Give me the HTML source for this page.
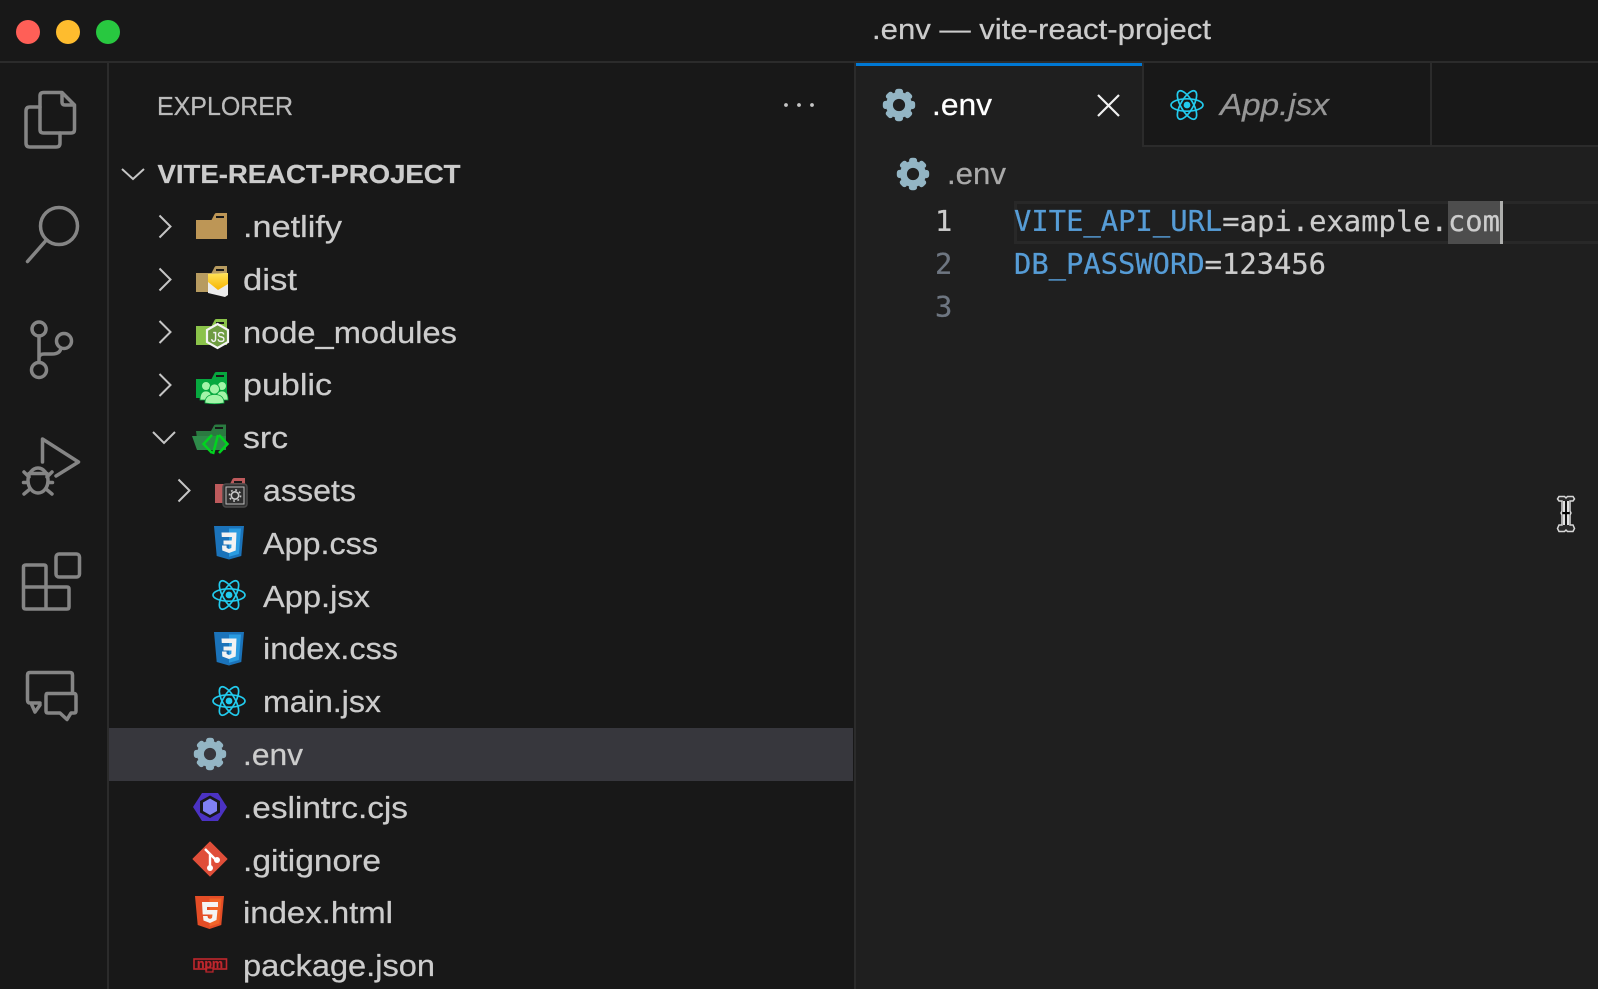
<!DOCTYPE html>
<html><head><meta charset="utf-8"><title>.env — vite-react-project</title>
<style>
html,body{margin:0;padding:0;background:#181818;width:1598px;height:989px;overflow:hidden}
svg{display:block}
text{font-family:"Liberation Sans",sans-serif;fill:#cccccc;stroke:#cccccc;stroke-width:.25}
.f{font-size:31px}
.m{font-family:"DejaVu Sans Mono","Liberation Mono",monospace;font-size:28.8px}
.ic{fill:none;stroke:#858585;stroke-width:3.5;stroke-linejoin:round;stroke-linecap:round}
.ch{fill:none;stroke:#c5c5c5;stroke-width:2}
</style></head><body>
<svg width="1598" height="989" viewBox="0 0 1598 989" xmlns="http://www.w3.org/2000/svg">
<defs>
<linearGradient id="yel" x1="0" y1="0" x2="0" y2="1"><stop offset="0" stop-color="#ffe25a"/><stop offset="1" stop-color="#f7b500"/></linearGradient>
<g id="gear"><circle r="9.6" fill="none" stroke="#93b5c4" stroke-width="7"/><circle r="13.6" fill="none" stroke="#93b5c4" stroke-width="5.2" stroke-linecap="round" stroke-dasharray="3 7.68" stroke-dashoffset="1.5" transform="rotate(-90)"/></g>
<g id="react" fill="none" stroke="#22cbee" stroke-width="1.7"><ellipse rx="16" ry="6.2"/><ellipse rx="16" ry="6.2" transform="rotate(60)"/><ellipse rx="16" ry="6.2" transform="rotate(120)"/><circle r="3.4" fill="#22cbee" stroke="none"/></g>
<path id="folder" d="M0 7H15.5L18.5 1.2Q19 0 20.5 0H31V26H0Z"/>
<g id="css"><path d="M0 0H30L27.3 30L15 33.5L2.7 30Z" fill="#1b73ba"/><path d="M15 2.5H27L24.8 28L15 30.8Z" fill="#2a9be0"/><path d="M7.5 6.5H22.5L21.7 24.5L15 27L8.3 24.5L8 19.5H12.5L12.7 22L15 23L17.3 22L17.5 18.5H9.5V14.5H17.7L18 11H7.8Z" fill="#f2f2f2"/></g>
</defs>

<!-- window -->
<rect width="1598" height="989" fill="#181818"/>
<rect x="856" y="63" width="742" height="926" fill="#1f1f1f"/>
<rect x="1142" y="63" width="456" height="82" fill="#181818"/>
<rect y="61" width="1598" height="2" fill="#2b2b2b"/>
<rect x="107" y="63" width="2" height="926" fill="#2b2b2b"/>
<rect x="854" y="63" width="2" height="926" fill="#2b2b2b"/>
<rect x="1142" y="145" width="456" height="2" fill="#2b2b2b"/>
<rect x="1142" y="63" width="2" height="84" fill="#2b2b2b"/>
<rect x="1430" y="63" width="2" height="84" fill="#2b2b2b"/>
<rect x="856" y="63" width="286" height="3" fill="#0078d4"/>

<!-- traffic lights -->
<circle cx="28" cy="32" r="12" fill="#ff5f57"/>
<circle cx="68" cy="32" r="12" fill="#febc2e"/>
<circle cx="108" cy="32" r="12" fill="#28c840"/>
<text x="872" y="39" font-size="29" textLength="339" lengthAdjust="spacingAndGlyphs">.env — vite-react-project</text>

<!-- activity bar -->
<path class="ic" d="M40 107V96Q40 92.5 43.5 92.5H62L74.5 105V129.5Q74.5 133 71 133H43.5Q40 133 40 129.5V107M62 92.5V102Q62 105 65 105H74.5"/>
<path class="ic" d="M40 107H30Q26 107 26 111V143Q26 147 30 147H56Q60 147 60 143V133"/>
<circle class="ic" cx="59" cy="226" r="18.5"/>
<path class="ic" d="M27.5 261.5L46 240.5"/>
<circle class="ic" cx="39" cy="329" r="7"/>
<circle class="ic" cx="39" cy="370" r="7.5"/>
<circle class="ic" cx="64" cy="341" r="7.5"/>
<path class="ic" d="M39 336V362M39 358Q39 354 44 354H52Q60 354 61 348"/>
<path class="ic" d="M42.5 462V439L78.5 462L56 476"/>
<ellipse class="ic" cx="38" cy="480.5" rx="10" ry="12.5"/>
<path class="ic" d="M29 473.5H47M24 472L29 477M52 472L47 477M23.5 482.5H28M48 482.5H52.5M24 494L30 489M52 494L46 489"/>
<rect class="ic" x="56" y="554" width="23.5" height="23" rx="3"/>
<path class="ic" d="M46 587H23.5V567Q23.5 565 26 565H44Q46 565 46 567V609M23.5 587V607Q23.5 609 26 609H67Q69 609 69 607V589Q69 587 67 587H46"/>
<path class="ic" d="M40 703H30Q27.5 703 27.5 700V675Q27.5 672.5 30 672.5H70Q72.5 672.5 72.5 675V692M31 703L35 712L40 705"/>
<path class="ic" d="M47 693.5H74Q76 693.5 76 696V711Q76 713 74 713H71L67 719.5L60 713H48Q46 713 46 711V696Q46 693.5 47 693.5Z"/>

<!-- explorer header -->
<text x="157" y="115" font-size="26" textLength="136" lengthAdjust="spacingAndGlyphs" style="fill:#bbbbbb;stroke:#bbbbbb">EXPLORER</text>
<circle cx="786" cy="105" r="1.9" fill="#c5c5c5"/><circle cx="799" cy="105" r="1.9" fill="#c5c5c5"/><circle cx="812" cy="105" r="1.9" fill="#c5c5c5"/>
<path class="ch" d="M122 169L133 179L144 169"/>
<text x="157.5" y="183" font-size="26" font-weight="700" textLength="303" lengthAdjust="spacingAndGlyphs">VITE-REACT-PROJECT</text>

<!-- selected row -->
<rect x="109" y="728" width="744" height="53" fill="#37373d"/>

<!-- chevrons -->
<path class="ch" d="M159.5 215.5L170.5 226.5L159.5 237.5"/>
<path class="ch" d="M159.5 268.5L170.5 279.5L159.5 290.5"/>
<path class="ch" d="M159.5 321L170.5 332L159.5 343"/>
<path class="ch" d="M159.5 374L170.5 385L159.5 396"/>
<path class="ch" d="M153 432L164 443L175 432"/>
<path class="ch" d="M178.5 479.5L189.5 490.5L178.5 501.5"/>

<!-- folder icons -->
<use href="#folder" x="196" y="213" fill="#bd9656"/><rect x="216" y="216" width="8" height="2" fill="#181818"/>
<use href="#folder" x="196" y="266" fill="#b79b60"/><rect x="216" y="269" width="8" height="2" fill="#181818"/>
<path d="M208 274L228 273V295L225 297L208 293Z" fill="#ececec"/>
<path d="M208 274L228 273V284L218 290L208 282Z" fill="url(#yel)"/>

<use href="#folder" x="196" y="319" fill="#8bc34a"/><rect x="216" y="322" width="8" height="2" fill="#181818"/>
<path d="M217.5 324L228 330V342L217.5 348L207 342V330Z" fill="#6f9c42" stroke="#f4f4f4" stroke-width="2.2"/>
<text x="218" y="342" font-size="15" text-anchor="middle" style="fill:#f4f4f4;stroke:#f4f4f4" textLength="14" lengthAdjust="spacingAndGlyphs">JS</text>

<use href="#folder" x="196" y="372" fill="#07a83f"/><rect x="216" y="375" width="8" height="2" fill="#181818"/>
<g fill="#a3f5a8" stroke="#07a83f" stroke-width=".8"><circle cx="206" cy="386" r="4.4"/><circle cx="222" cy="386" r="4.4"/><path d="M200 400Q200 391 206 391Q212 391 212 400Z"/><path d="M216 400Q216 391 222 391Q228 391 228 400Z"/><circle cx="214.5" cy="389" r="5"/><path d="M205 403Q205 394.5 214.5 394.5Q224 394.5 224 403Q214.5 404.5 205 403Z"/></g>

<path d="M196 431H211L214 425.5Q214.5 424.5 216 424.5H226V446H198Z" fill="#2a7a40"/><rect x="215" y="427" width="8" height="2" fill="#181818"/>
<path d="M192 436H226V450L197 450Z" fill="#2e8a49"/>
<path d="M212 435L203.5 444L212 453M219 435L227.5 444L219 453M218 435L213 454" fill="none" stroke="#00d41f" stroke-width="2.5"/>

<path d="M215 484H230L232.5 479Q233 478 234.5 478H245V503H215Z" fill="#bd5a5c"/><rect x="234" y="481" width="8" height="2" fill="#181818"/>
<rect x="223" y="484" width="24" height="23" rx="3" fill="#2f2f2f" stroke="#4a4a4a" stroke-width="1.5"/>
<rect x="226" y="487" width="18" height="17" fill="none" stroke="#bdbdbd" stroke-width="1"/>
<circle cx="235" cy="495.5" r="3.7" fill="none" stroke="#c9c9c9" stroke-width="1.6"/>
<circle cx="235" cy="495.5" r="5.6" fill="none" stroke="#c9c9c9" stroke-width="1.6" stroke-dasharray="1.8 2.6"/>

<!-- file icons -->
<use href="#css" x="214" y="526"/>
<use href="#react" x="229" y="595"/>
<use href="#css" x="214" y="632"/>
<use href="#react" x="229" y="701"/>
<use href="#gear" x="210" y="754"/>

<path d="M202 793H218L227 807L218 821H202L193 807Z" fill="#4b32c3"/>
<path d="M210 795.5L220 801V812.5L210 818L200 812.5V801Z" fill="#181818"/>
<path d="M210 798.5L217 802.5V811L210 815L203 811V802.5Z" fill="#8080f2"/>

<path d="M210 842L227 859L210 876L193 859Z" fill="#e04e39" stroke="#e04e39" stroke-width="1" stroke-linejoin="round"/>
<path d="M205 849L217 861M210 854V868" stroke="#fff" stroke-width="2.4" fill="none"/>
<circle cx="210" cy="868" r="3" fill="#fff"/><circle cx="217" cy="860" r="3" fill="#fff"/>

<path d="M195 896H224L221.3 925L209.5 929L197.7 925Z" fill="#e44d26"/>
<path d="M209.5 898.5V926.5L219.3 923.5L221.5 898.5Z" fill="#f16529"/>
<path d="M202 902H218V907H207V910H217.5L216.5 920L210 923L203.5 920.5L203 916H207.5L208 918L210 919L212 918L212.5 914.5H202.7Z" fill="#f4f4f4"/>

<rect x="194" y="959" width="32.5" height="10" fill="#2a1517" stroke="#c0272d" stroke-width="1.6"/>
<rect x="206" y="968" width="7" height="4" fill="#2a1517" stroke="#c0272d" stroke-width="1.2"/>
<text x="210" y="968" font-size="13" font-weight="700" text-anchor="middle" textLength="26" lengthAdjust="spacingAndGlyphs" style="fill:#c0272d;stroke:#c0272d">npm</text>

<!-- tree text -->
<text class="f" x="243" y="237" textLength="99" lengthAdjust="spacingAndGlyphs">.netlify</text>
<text class="f" x="243" y="290" textLength="54" lengthAdjust="spacingAndGlyphs">dist</text>
<text class="f" x="243" y="343" textLength="214" lengthAdjust="spacingAndGlyphs">node_modules</text>
<text class="f" x="243" y="395" textLength="89" lengthAdjust="spacingAndGlyphs">public</text>
<text class="f" x="243" y="448" textLength="45" lengthAdjust="spacingAndGlyphs">src</text>
<text class="f" x="263" y="501" textLength="93" lengthAdjust="spacingAndGlyphs">assets</text>
<text class="f" x="263" y="554" textLength="115" lengthAdjust="spacingAndGlyphs">App.css</text>
<text class="f" x="263" y="607" textLength="107" lengthAdjust="spacingAndGlyphs">App.jsx</text>
<text class="f" x="263" y="659" textLength="135" lengthAdjust="spacingAndGlyphs">index.css</text>
<text class="f" x="263" y="712" textLength="118" lengthAdjust="spacingAndGlyphs">main.jsx</text>
<text class="f" x="243" y="765" textLength="60" lengthAdjust="spacingAndGlyphs">.env</text>
<text class="f" x="243" y="818" textLength="165" lengthAdjust="spacingAndGlyphs">.eslintrc.cjs</text>
<text class="f" x="243" y="871" textLength="138" lengthAdjust="spacingAndGlyphs">.gitignore</text>
<text class="f" x="243" y="923" textLength="150" lengthAdjust="spacingAndGlyphs">index.html</text>
<text class="f" x="243" y="976" textLength="192" lengthAdjust="spacingAndGlyphs">package.json</text>

<!-- tabs -->
<use href="#gear" x="899" y="105"/>
<text class="f" x="932" y="115" textLength="60" lengthAdjust="spacingAndGlyphs" style="fill:#ffffff;stroke:#ffffff">.env</text>
<path d="M1098 95L1119 116M1119 95L1098 116" stroke="#f0f0f0" stroke-width="2.2" fill="none"/>
<use href="#react" x="1187" y="105"/>
<text class="f" x="1220" y="115" font-style="italic" textLength="109" lengthAdjust="spacingAndGlyphs" style="fill:#969696;stroke:#969696">App.jsx</text>

<!-- breadcrumb -->
<use href="#gear" x="913" y="174"/>
<text class="f" x="947" y="184" textLength="59" lengthAdjust="spacingAndGlyphs" style="fill:#a9a9a9;stroke:#a9a9a9">.env</text>

<!-- editor -->
<path d="M1598 202.5H1015.5V242.5H1598" fill="none" stroke="#282828" stroke-width="3"/>
<rect x="1448" y="201" width="52" height="43" fill="#4d4d4d"/>
<rect x="1500" y="201" width="3" height="43" fill="#aeafad"/>
<text class="m" x="935" y="231">1</text>
<text class="m" x="935" y="274" style="fill:#6e7681;stroke:#6e7681">2</text>
<text class="m" x="935" y="317" style="fill:#6e7681;stroke:#6e7681">3</text>
<text class="m" x="1014" y="231" textLength="486"><tspan style="fill:#569cd6;stroke:#569cd6">VITE_API_URL</tspan>=api.example.com</text>
<text class="m" x="1014" y="274" textLength="312"><tspan style="fill:#569cd6;stroke:#569cd6">DB_PASSWORD</tspan>=123456</text>

<!-- I-beam cursor -->
<path d="M1559 496.5H1564.5L1566 498L1567.5 496.5H1573L1574.5 499L1573 501H1570V511L1571 513L1570 515V525H1573L1574.5 528.5L1573 531.5H1567.5L1566 530L1564.5 531.5H1559L1557.5 528.5L1559 525H1562V515L1561 513L1562 511V501H1559L1557.5 499Z" fill="#2a2a2a" stroke="#d8d8d8" stroke-width="1.5"/>
<rect x="1563" y="501" width="6" height="24" fill="#e0e0e0"/>
<rect x="1565" y="501" width="2" height="24" fill="#111"/>
<rect x="1562.5" y="512" width="7" height="2.2" fill="#000"/>
</svg>
</body></html>
